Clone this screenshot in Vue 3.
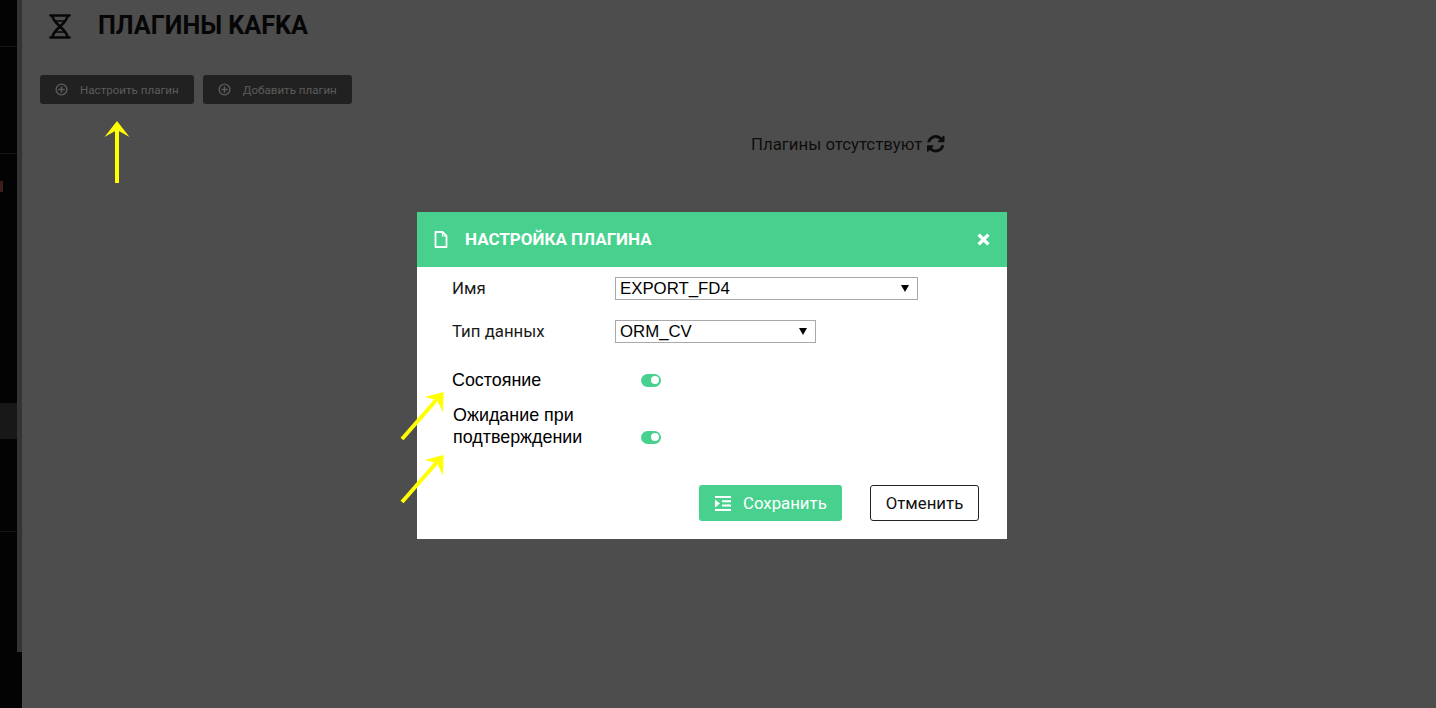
<script setup>
import { ref } from 'vue'

const pluginName = ref('EXPORT_FD4')
const dataType = ref('ORM_CV')
const actions = ['Настроить плагин', 'Добавить плагин']
const dividers = [46, 153, 531]

// стрелки-пометки поверх скриншота
const arrows = [
  { line: '117,183 117,128', head: '117,121 129.5,137 117,130 104.5,137' },
  { line: '402,439 438,398', head: '443.5,392 443,412.5 437,400 424.5,397' },
  { line: '402,502 438,461', head: '443.5,455 443,475.5 437,463 424.5,460' }
]
</script>

<template>
  <div class="page">
    <aside class="sidebar">
      <div class="mark"></div>
      <div class="active-item"></div>
      <div v-for="y in dividers" :key="y" class="divider" :style="{ top: y + 'px' }"></div>
    </aside>
    <div class="scrollbar"></div>

    <main class="content">
      <header class="title-row">
        <svg class="dna" viewBox="0 0 22 25" fill="none" stroke="currentColor" stroke-width="2.600">
          <path d="M1.500 1.500h19M1.500 23.500h19" stroke-linecap="round" />
          <path d="M3.500 1.500C3.500 10 18.500 15 18.500 23.500M18.500 1.500C18.500 10 3.500 15 3.500 23.500" />
          <path d="M6 7h10M6 18h10" stroke-width="1.600" />
        </svg>
        <h1>ПЛАГИНЫ KAFKA</h1>
      </header>

      <div class="actions">
        <button v-for="label in actions" :key="label" class="action">
          <svg viewBox="0 0 14 14" fill="none" stroke="currentColor" stroke-width="1.500">
            <circle cx="7" cy="7" r="5.800" />
            <path d="M7 3.600v6.800M3.600 7h6.800" />
          </svg>
          {{ label }}
        </button>
      </div>

      <p class="empty">
        Плагины отсутствуют
        <svg viewBox="0 0 1536 1536" fill="currentColor">
          <path d="M1511 928q0 5-1 7-64 268-268 434.500t-478 166.500q-146 0-282.500-55t-243.500-157l-129 129q-19 19-45 19t-45-19-19-45v-448q0-26 19-45t45-19h448q26 0 45 19t19 45-19 45l-137 137q71 66 161 102t187 36q134 0 250-65t186-179q11-17 53-117 8-23 30-23h192q13 0 22.500 9.500t9.500 22.500zM1536 128v448q0 26-19 45t-45 19h-448q-26 0-45-19t-19-45 19-45l138-138q-148-137-349-137-134 0-250 65t-186 179q-11 17-53 117-8 23-30 23h-199q-13 0-22.500-9.500t-9.500-22.500v-7q65-268 270-434.500t480-166.500q146 0 284 55.500t245 156.500l130-129q19-19 45-19t45 19 19 45z" />
        </svg>
      </p>
    </main>

    <div class="modal-layer">
      <section class="modal">
        <header class="modal-head">
          <svg class="file" viewBox="0 0 14 17" fill="none" stroke="currentColor" stroke-width="1.800">
            <path d="M1.500 1h7l4 4v11h-11z" stroke-linejoin="round" />
            <path d="M8.500 1v4h4" stroke-width="1.200" />
          </svg>
          <h2>НАСТРОЙКА ПЛАГИНА</h2>
          <svg class="close" viewBox="0 0 12 12" stroke="currentColor" stroke-width="3.200">
            <path d="M1.500 1.500l9 9M10.500 1.500l-9 9" />
          </svg>
        </header>

        <div class="modal-body">
          <div class="field">
            <label>Имя</label>
            <div class="select wide">
              <select v-model="pluginName"><option>EXPORT_FD4</option></select>
              <svg viewBox="0 0 8 7"><path d="M0 0h8L4 7z" /></svg>
            </div>
          </div>
          <div class="field second">
            <label>Тип данных</label>
            <div class="select narrow">
              <select v-model="dataType"><option>ORM_CV</option></select>
              <svg viewBox="0 0 8 7"><path d="M0 0h8L4 7z" /></svg>
            </div>
          </div>

          <div class="switch-row state">
            <span class="switch-label">Состояние</span>
            <span class="toggle"></span>
          </div>
          <div class="switch-row waiting">
            <span class="switch-label">Ожидание при подтверждении</span>
            <span class="toggle"></span>
          </div>

          <footer class="modal-foot">
            <button class="save">
              <svg viewBox="0 0 16 15" fill="currentColor">
                <path d="M0 0h16v2H0zM7 4.300h9v2H7zM7 8.500h9v2H7zM0 13h16v2H0zM0 3.500l5 4-5 4z" />
              </svg>
              Сохранить
            </button>
            <button class="cancel">Отменить</button>
          </footer>
        </div>
      </section>
    </div>

    <svg class="marks" viewBox="0 0 1436 708">
      <g v-for="a in arrows" :key="a.head">
        <polyline :points="a.line" stroke="#ffff00" stroke-width="4" fill="none" />
        <polygon :points="a.head" fill="#ffff00" />
      </g>
    </svg>
  </div>
</template>

<style>
html, body { margin: 0; overflow: hidden; }
</style>

<style scoped>
.page {
  position: relative;
  display: flex;
  width: 1436px;
  height: 708px;
  overflow: hidden;
  background: #4d4d4d;
  font-family: Roboto, "Liberation Sans", sans-serif;
}

.sidebar { position: relative; width: 17px; background: #030303; flex: none; }
.divider { position: absolute; left: 0; right: 0; height: 1px; background: #141414; }
.active-item { position: absolute; top: 403px; left: 0; right: 0; height: 36px; background: #181818; }
.mark { position: absolute; top: 181px; left: 0; width: 3px; height: 11px; background: #3a2018; }

.scrollbar { width: 5px; height: 652px; background: #343434; flex: none; }
.page::after {
  content: '';
  position: absolute;
  left: 17px;
  top: 652px;
  width: 5px;
  height: 56px;
  background: #030303;
}

.content { flex: 1; padding-left: 18px; }

.title-row { display: flex; align-items: center; height: 52px; padding-left: 9px; color: #060606; }
.dna { width: 22px; height: 25px; }
.title-row h1 { margin: 0 0 0 27px; font-size: 25.200px; font-weight: 700; line-height: 52px; }

.actions { display: flex; gap: 9px; margin-top: 23px; }
.action {
  display: flex;
  align-items: center;
  height: 29px;
  padding: 0 15px;
  border: 0;
  border-radius: 3px;
  background: #212121;
  color: #5c5c5c;
  font: 11.600px Roboto, sans-serif;
}
.action svg { width: 13px; height: 13px; margin-right: 12px; }

.empty {
  display: flex;
  align-items: center;
  margin: 30px 0 0 711px;
  height: 20px;
  color: #0d0d0d;
  font-size: 16.800px;
}
.empty svg { width: 17.500px; height: 17.500px; margin-left: 5px; }

.modal-layer { position: absolute; inset: 0; display: flex; justify-content: center; padding: 212px 12px 0 0; box-sizing: border-box; }
.modal { width: 590px; height: 327px; background: #fff; }

.modal-head { display: flex; align-items: center; height: 55px; padding: 0 17px; background: #48d18e; color: #fff; }
.modal-head h2 { flex: 1; margin: 0 0 2px 17px; font-size: 17px; font-weight: 700; }
.file { width: 14px; height: 17px; }
.close { width: 13px; height: 13px; }

.modal-body { padding: 10px 28px 0 35px; color: #1a1a1a; font-size: 16.800px; }
.field { display: flex; align-items: center; height: 23px; }
.field label { width: 163px; margin-bottom: 2px; }
.second { margin-top: 20px; }

.select { position: relative; height: 23px; }
.wide { width: 303px; }
.narrow { width: 201px; }
.select select {
  width: 100%;
  height: 100%;
  padding: 0 4px;
  box-sizing: border-box;
  border: 1px solid #a9a9a9;
  border-radius: 0;
  background: #fff;
  color: #000;
  font: 16.800px "Liberation Sans", sans-serif;
  appearance: none;
}
.select svg { position: absolute; right: 9px; top: 8px; width: 8px; height: 7px; }

.switch-row { display: flex; align-items: center; color: #000; font: 17.900px/22px "Liberation Sans", sans-serif; }
.switch-label { width: 135px; }
.state { margin-top: 26px; height: 22px; }
.waiting { margin-top: 13px; height: 44px; padding-left: 1px; }
.state .toggle { margin-left: 54px; }
.waiting .switch-label { align-self: flex-start; }
.waiting .toggle { margin: 22px 0 0 53px; }

.toggle { position: relative; width: 20px; height: 13px; border-radius: 7px; background: #48d18e; }
.toggle::after {
  content: '';
  position: absolute;
  top: 2.500px;
  right: 2.500px;
  width: 8px;
  height: 8px;
  border-radius: 50%;
  background: #fff;
}

.modal-foot { display: flex; justify-content: flex-end; gap: 28px; margin-top: 37px; }
.modal-foot button { height: 36px; border-radius: 3px; font: 16.800px Roboto, sans-serif; }
.save {
  display: flex;
  align-items: center;
  width: 143px;
  padding: 0 0 0 16px;
  border: 0;
  background: #48d18e;
  color: #fff;
}
.save svg { width: 16px; height: 15px; margin-right: 12px; }
.cancel { width: 109px; padding: 0; border: 1px solid #222; background: #fff; color: #111; }

.marks { position: absolute; inset: 0; width: 1436px; height: 708px; pointer-events: none; }
</style>
